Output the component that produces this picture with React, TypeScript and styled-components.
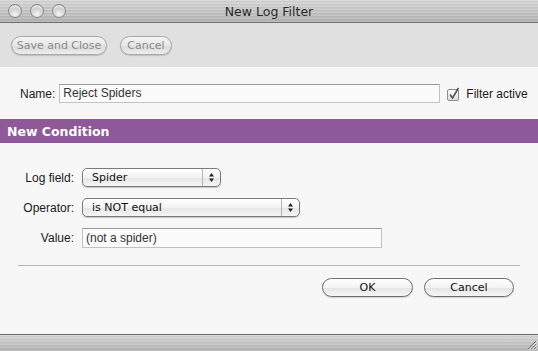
import styled, { createGlobalStyle } from 'styled-components'

const GlobalStyle = createGlobalStyle`
  html, body {
    margin: 0;
    padding: 0;
    background: #f7f7f7;
  }
  body {
    font-family: 'Liberation Sans', Arial, sans-serif;
  }
`

const aquaFont = `'DejaVu Sans', 'Liberation Sans', sans-serif`

const Window = styled.div`
  display: flex;
  flex-direction: column;
  width: 538px;
  height: 351px;
  overflow: hidden;
  background: #f7f7f7;
`

const metal = `
  background-color: #c4c4c4;
  background-image:
    repeating-linear-gradient(180deg, rgba(255,255,255,0.12) 0 1px, rgba(0,0,0,0.04) 1px 2px, transparent 2px 3px),
    linear-gradient(180deg, #d6d6d6 0%, #c6c6c6 50%, #b2b2b2 100%);
`

const TitleBar = styled.div`
  ${metal}
  position: relative;
  display: flex;
  align-items: center;
  justify-content: center;
  height: 22px;
  border-bottom: 1px solid #6f6f6f;
  flex-shrink: 0;
`

const Lights = styled.div`
  position: absolute;
  left: 8px;
  top: 4px;
  display: flex;
  gap: 8px;
`

const Light = styled.span`
  width: 14px;
  height: 14px;
  border-radius: 50%;
  box-sizing: border-box;
  border: 1px solid #858585;
  background: radial-gradient(circle at 50% 78%, #f6f6f6 0%, #d4d4d4 45%, #a6a6a6 100%);
  box-shadow: inset 0 2px 2px rgba(255, 255, 255, 0.7);
`

const Title = styled.div`
  font-family: ${aquaFont};
  font-size: 12.5px;
  color: #2a2a2a;
`

const Toolbar = styled.div`
  display: flex;
  align-items: center;
  gap: 13px;
  height: 44px;
  padding-left: 11px;
  background: #e0e0e0;
  flex-shrink: 0;
`

const PillButton = styled.button<{ $disabled?: boolean; $width?: number }>`
  height: 19px;
  width: ${(p) => (p.$width ? `${p.$width}px` : 'auto')};
  padding: 0;
  white-space: nowrap;
  border-radius: 10px;
  border: 1px solid ${(p) => (p.$disabled ? '#a8a8a8' : '#6d6d6d')};
  background: ${(p) =>
    p.$disabled
      ? 'linear-gradient(180deg, #f4f4f4 0%, #e6e6e6 55%, #dcdcdc 56%, #ececec 100%)'
      : 'linear-gradient(180deg, #ffffff 0%, #f3f3f3 50%, #e4e4e4 51%, #f6f6f6 100%)'};
  box-shadow: 0 1px 1px rgba(0, 0, 0, 0.15);
  font-family: ${aquaFont};
  font-size: 11px;
  line-height: 17px;
  color: ${(p) => (p.$disabled ? '#8a8a8a' : '#111')};
  text-align: center;
  box-sizing: border-box;
`

const Content = styled.div`
  flex: 1;
  display: flex;
  flex-direction: column;
  background: #f7f7f7;
`

const NameRow = styled.div`
  display: flex;
  align-items: center;
  height: 19px;
  margin: 17px 0 16px 20px;
`

const Label = styled.label`
  font-size: 12px;
  color: #1a1a1a;
  white-space: nowrap;
`

const TextField = styled.div<{ $width: number; $height?: number }>`
  width: ${(p) => p.$width}px;
  height: ${(p) => p.$height ?? 19}px;
  box-sizing: border-box;
  border: 1px solid #c2c2c2;
  border-top-color: #9a9a9a;
  background: #fbfbfb;
  font-size: 12px;
  line-height: ${(p) => (p.$height ?? 19) - 2}px;
  padding-left: 3px;
  color: #333;
`

const NameField = styled(TextField)`
  margin-left: 4px;
`

const CheckWrap = styled.div`
  display: flex;
  align-items: center;
  gap: 6px;
  margin-left: 7px;
`

const SectionBar = styled.div`
  height: 24px;
  background: #8f5898;
  display: flex;
  align-items: center;
  padding-left: 7px;
  font-family: ${aquaFont};
  font-weight: bold;
  font-size: 12.5px;
  color: #ffffff;
`

const Form = styled.div`
  display: grid;
  grid-template-columns: 74px auto;
  column-gap: 8px;
  row-gap: 11px;
  align-items: center;
  justify-items: start;
  margin-top: 25px;
`

const FormLabel = styled(Label)`
  justify-self: end;
`

const Popup = styled.div<{ $width: number }>`
  position: relative;
  display: flex;
  align-items: center;
  width: ${(p) => p.$width}px;
  height: 19px;
  box-sizing: border-box;
  border: 1px solid #7a7a7a;
  border-radius: 5px;
  background: linear-gradient(180deg, #ffffff 0%, #f2f2f2 50%, #e5e5e5 51%, #f5f5f5 100%);
  box-shadow: 0 1px 1px rgba(0, 0, 0, 0.2);
  font-family: ${aquaFont};
  font-size: 11px;
  color: #111;
  padding-left: 9px;
`

const PopupArrows = styled.div`
  position: absolute;
  right: 0;
  top: 0;
  bottom: 0;
  width: 17px;
  border-left: 1px solid #b4b4b4;
  display: flex;
  align-items: center;
  justify-content: center;
`

const Separator = styled.div`
  height: 1px;
  background: #b5b5b5;
  margin: 17px 18px 0 18px;
`

const Actions = styled.div`
  display: flex;
  justify-content: flex-end;
  gap: 11px;
  margin: 12px 24px 0 0;
`

const BottomBar = styled.div`
  ${metal}
  position: relative;
  height: 16px;
  border-top: 1px solid #6a6a6a;
  flex-shrink: 0;
`

const Grip = styled.svg`
  position: absolute;
  right: 1px;
  bottom: 1px;
`

const Arrows = () => (
  <svg width="7" height="11" viewBox="0 0 7 11">
    <path d="M3.5 1 L6 4.5 L1 4.5 Z" fill="#222" />
    <path d="M3.5 10 L6 6.5 L1 6.5 Z" fill="#222" />
  </svg>
)

const Checkbox = () => (
  <svg width="13" height="14" viewBox="0 0 13 14">
    <defs>
      <linearGradient id="cb" x1="0" y1="0" x2="0" y2="1">
        <stop offset="0" stopColor="#ffffff" />
        <stop offset="1" stopColor="#dcdcdc" />
      </linearGradient>
    </defs>
    <rect x="0.5" y="2.5" width="11" height="11" rx="1.5" fill="url(#cb)" stroke="#8d8d8d" />
    <path d="M3 7.5 L5.5 11 L11.5 1" fill="none" stroke="#555" strokeWidth="1.6" />
  </svg>
)

const Select = ({ width, value }: { width: number; value: string }) => (
  <Popup $width={width}>
    {value}
    <PopupArrows>
      <Arrows />
    </PopupArrows>
  </Popup>
)

export default function App() {
  return (
    <Window>
      <GlobalStyle />
      <TitleBar>
        <Lights>
          <Light />
          <Light />
          <Light />
        </Lights>
        <Title>New Log Filter</Title>
      </TitleBar>

      <Toolbar>
        <PillButton $disabled $width={96}>Save and Close</PillButton>
        <PillButton $disabled $width={52}>Cancel</PillButton>
      </Toolbar>

      <Content>
        <NameRow>
          <Label>Name:</Label>
          <NameField $width={381}>Reject Spiders</NameField>
          <CheckWrap>
            <Checkbox />
            <Label>Filter active</Label>
          </CheckWrap>
        </NameRow>

        <SectionBar>New Condition</SectionBar>

        <Form>
          <FormLabel>Log field:</FormLabel>
          <Select width={139} value="Spider" />
          <FormLabel>Operator:</FormLabel>
          <Select width={218} value="is NOT equal" />
          <FormLabel>Value:</FormLabel>
          <TextField $width={300} $height={20}>(not a spider)</TextField>
        </Form>

        <Separator />

        <Actions>
          <PillButton $width={91}>OK</PillButton>
          <PillButton $width={90}>Cancel</PillButton>
        </Actions>
      </Content>

      <BottomBar>
        <Grip width="11" height="11" viewBox="0 0 11 11">
          <path d="M10 2 L2 10 M10 5 L5 10 M10 8 L8 10" stroke="#6e6e6e" strokeWidth="1" />
          <path d="M11 3 L3 11 M11 6 L6 11 M11 9 L9 11" stroke="#e8e8e8" strokeWidth="1" />
        </Grip>
      </BottomBar>
    </Window>
  )
}
